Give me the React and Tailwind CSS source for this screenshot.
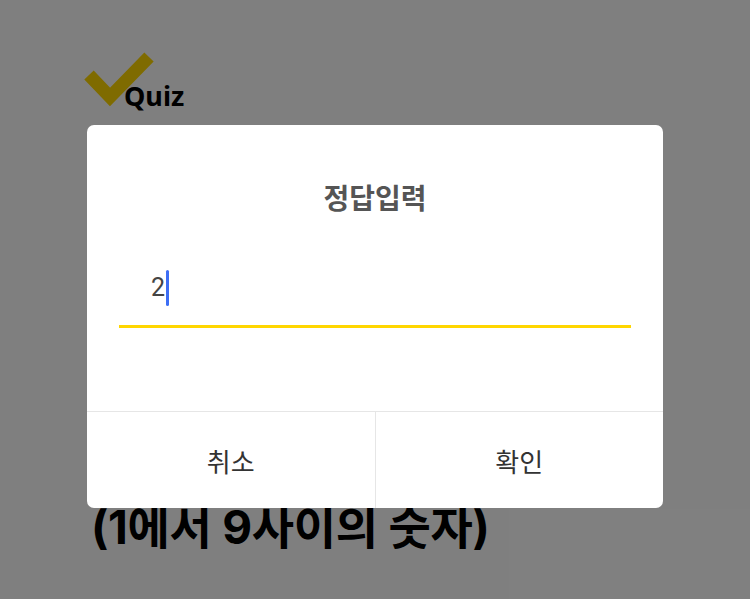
export default function App() {
  return (
    <div className="relative h-[599px] w-[750px] overflow-hidden bg-white font-['Noto_Sans','Noto_Sans_CJK_KR',sans-serif]">
      <div className="px-[85px] pt-[47px]">
        <div className="flex items-start">
          <svg width="80" height="60" viewBox="0 0 80 60" className="-ml-[6px] shrink-0">
            <polyline
              points="10,28 31,50 70,10"
              fill="none"
              stroke="#ffd700"
              strokeWidth="13"
              strokeLinejoin="miter"
              strokeLinecap="butt"
            />
          </svg>
          <div className="-ml-[35px] mt-[31px] text-[27px] font-bold leading-[36px] text-black">
            Quiz
          </div>
        </div>
        <div className="mt-[386px] pl-[6px] font-['Inter','Noto_Sans_CJK_KR',sans-serif] text-[46px] font-bold leading-[54px] tracking-[-0.3px] text-black">
          (1에서 9사이의 숫자)
        </div>
      </div>

      <div className="absolute inset-0 flex justify-center bg-black/50 pt-[125px]">
        <div className="flex h-[383px] w-[576px] flex-col overflow-hidden rounded-[7px] bg-white font-['Noto_Sans_CJK_KR',sans-serif]">
          <div className="mt-[56px] text-center text-[28px] font-bold leading-[32px] text-[#555555]">
            정답입력
          </div>
          <div className="mx-[32px] mt-[57px] border-b-[3px] border-[#ffd600] pb-[19px]">
            <div className="flex h-[36px] items-center pl-[32px] font-['Roboto',sans-serif] text-[25px] text-[#444444]">
              <span>2</span>
              <span className="ml-[1px] h-[36px] w-[3px] rounded-full bg-[#3d6ef5]" />
            </div>
          </div>
          <div className="flex-1" />
          <div className="flex h-[97px] border-t border-[#e6e6e6]">
            <button className="flex flex-1 items-center justify-center border-r border-[#e6e6e6] text-[26px] text-[#333333]">
              취소
            </button>
            <button className="flex flex-1 items-center justify-center text-[26px] text-[#333333]">
              확인
            </button>
          </div>
        </div>
      </div>
    </div>
  )
}
